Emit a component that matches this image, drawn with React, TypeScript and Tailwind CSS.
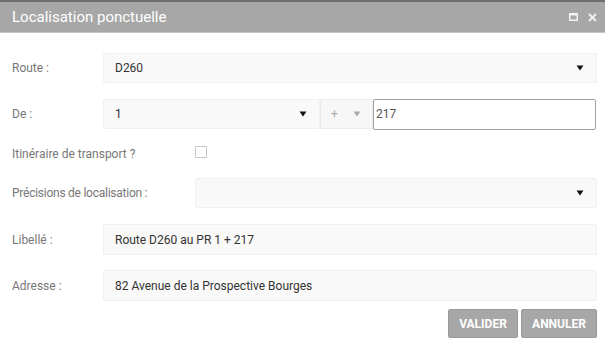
import React from "react";

const Arrow = ({ color = "#111" }: { color?: string }) => (
  <svg width="8" height="6" viewBox="0 0 8 6">
    <path d="M0.5 0.5 H7.5 L4 5.5 Z" fill={color} />
  </svg>
);

export default function App() {
  return (
    <div className="w-[605px] h-[345px] bg-white overflow-hidden font-['Roboto',sans-serif]">
      <div className="h-[2px] bg-[#6e6e6e]" />
      <div className="h-[31px] bg-[#a7a7a7] flex items-center justify-between pl-[12px] pr-[8px] border-b border-[#c4c4c4]">
        <span className="text-white text-[15px] leading-none">Localisation ponctuelle</span>
        <div className="flex items-center gap-[10px]">
          <svg width="9" height="8" viewBox="0 0 9 8">
            <rect x="0.75" y="0.75" width="7.5" height="6.5" fill="none" stroke="#f2f2f2" strokeWidth="1.5" />
            <rect x="0.5" y="0.5" width="8" height="2" fill="#f2f2f2" />
          </svg>
          <svg width="9" height="9" viewBox="0 0 9 9">
            <path d="M1 1 L8 8 M8 1 L1 8" stroke="#f2f2f2" strokeWidth="1.8" />
          </svg>
        </div>
      </div>

      <div className="pt-[20px] pl-[12px] pr-[8px] flex flex-col">
        {/* Route */}
        <div className="flex items-center h-[30px]">
          <span className="w-[91px] text-[12px] text-[#777]">Route :</span>
          <div className="flex-1 h-[30px] bg-[#f9f9f9] border border-[#f0f0f0] rounded-[2px] flex items-center justify-between pl-[11px] pr-[12px]">
            <span className="text-[12px] text-[#333]">D260</span>
            <Arrow />
          </div>
        </div>

        {/* De */}
        <div className="flex items-center h-[30px] mt-[16px]">
          <span className="w-[91px] text-[12px] text-[#777]">De :</span>
          <div className="w-[217px] h-[30px] bg-[#f9f9f9] border border-[#f0f0f0] rounded-l-[2px] flex items-center justify-between pl-[11px] pr-[12px]">
            <span className="text-[12px] text-[#333]">1</span>
            <Arrow />
          </div>
          <div className="w-[53px] h-[30px] bg-[#f7f7f7] border border-[#ececec] flex items-center pl-[10px] gap-[15px]">
            <span className="text-[12px] text-[#aaa] leading-none">+</span>
            <Arrow color="#aaa" />
          </div>
          <div className="flex-1 h-[31px] bg-white border border-[#a0a0a0] rounded-[2px] flex items-center pl-[2px] mr-[1px]">
            <span className="text-[12px] text-[#555]">217</span>
          </div>
        </div>

        {/* Itinéraire */}
        <div className="flex items-center h-[17px] mt-[16px]">
          <span className="w-[183px] text-[12px] text-[#777]">Itinéraire de transport ?</span>
          <div className="w-[12px] h-[12px] border border-[#c8c8c8] bg-white -mt-[3px]" />
        </div>

        {/* Précisions */}
        <div className="flex items-center h-[30px] mt-[16px]">
          <span className="w-[183px] text-[12px] text-[#777] tracking-[-0.25px]">Précisions de localisation :</span>
          <div className="flex-1 h-[30px] bg-[#f9f9f9] border border-[#f0f0f0] rounded-[2px] flex items-center justify-end pr-[12px]">
            <Arrow />
          </div>
        </div>

        {/* Libellé */}
        <div className="flex items-center h-[31px] mt-[16px]">
          <span className="w-[91px] text-[12px] text-[#777]">Libellé :</span>
          <div className="flex-1 h-[31px] bg-[#f9f9f9] border border-[#f0f0f0] rounded-[2px] flex items-center pl-[11px]">
            <span className="text-[12px] text-[#333]">Route D260 au PR 1 + 217</span>
          </div>
        </div>

        {/* Adresse */}
        <div className="flex items-center h-[31px] mt-[15px]">
          <span className="w-[91px] text-[12px] text-[#777]">Adresse :</span>
          <div className="flex-1 h-[31px] bg-[#f9f9f9] border border-[#f0f0f0] rounded-[2px] flex items-center pl-[11px]">
            <span className="text-[12px] text-[#333]">82 Avenue de la Prospective Bourges</span>
          </div>
        </div>

        {/* Buttons */}
        <div className="flex justify-end gap-[3px] mt-[8px]">
          <button className="w-[70px] h-[29px] bg-[#a7a7a7] border border-[#9a9a9a] rounded-[2px] text-white text-[12px] font-bold">VALIDER</button>
          <button className="w-[76px] h-[29px] bg-[#a7a7a7] border border-[#9a9a9a] rounded-[2px] text-white text-[12px] font-bold">ANNULER</button>
        </div>
      </div>
    </div>
  );
}
